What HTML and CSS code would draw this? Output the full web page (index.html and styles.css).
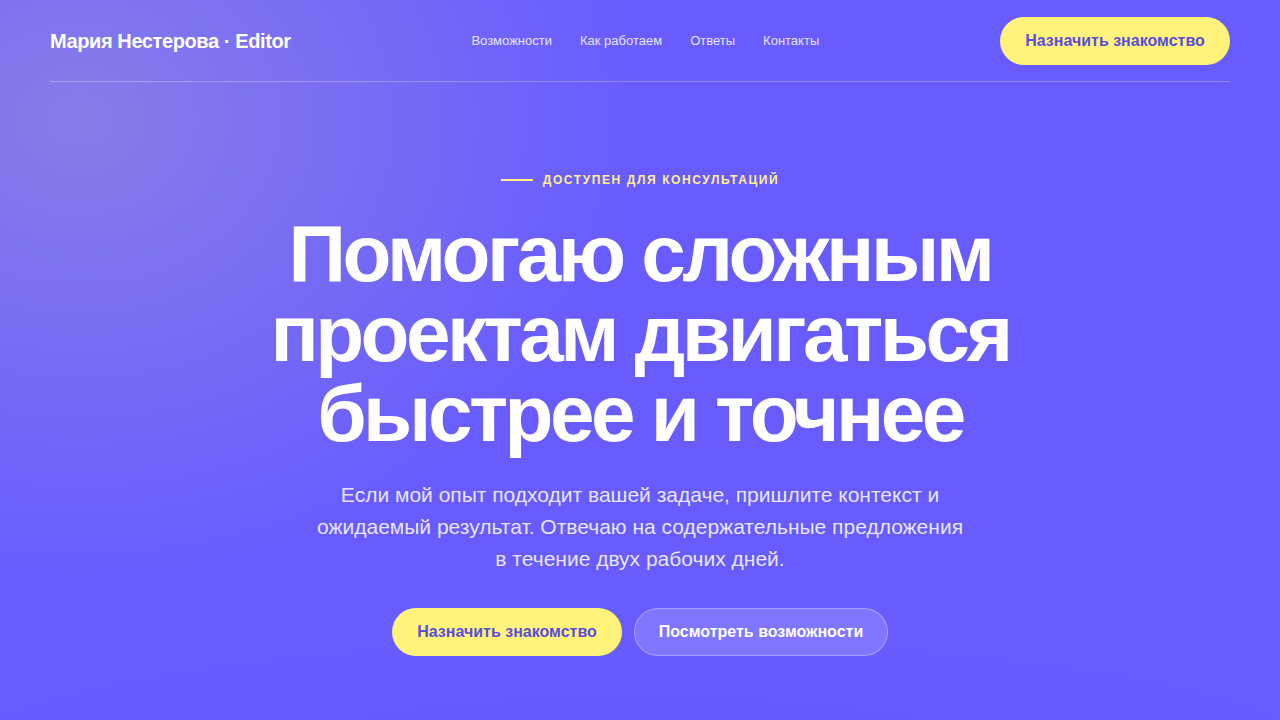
FILE: index.html
```html
<!DOCTYPE html>
<html lang="ru">
<head>
<meta charset="utf-8">
<title>Мария Нестерова · Editor</title>
<link rel="stylesheet" href="styles.css">
</head>
<body>
<div class="page">
  <header class="header">
    <div class="logo">Мария Нестерова · Editor</div>
    <nav class="nav">
      <a href="#">Возможности</a>
      <a href="#">Как работаем</a>
      <a href="#">Ответы</a>
      <a href="#">Контакты</a>
    </nav>
    <a class="btn btn-primary" href="#">Назначить знакомство</a>
  </header>
  <main class="hero">
    <div class="eyebrow"><span class="eyebrow-line"></span>Доступен для консультаций</div>
    <h1 class="title">Помогаю сложным проектам двигаться быстрее и точнее</h1>
    <p class="lead">Если мой опыт подходит вашей задаче, пришлите контекст и ожидаемый результат. Отвечаю на содержательные предложения в течение двух рабочих дней.</p>
    <div class="actions">
      <a class="btn btn-primary" href="#">Назначить знакомство</a>
      <a class="btn btn-ghost" href="#">Посмотреть возможности</a>
    </div>
  </main>
</div>
</body>
</html>
```
FILE: styles.css
```css
* { box-sizing: border-box; }
html, body { margin: 0; padding: 0; }
body {
  font-family: "Liberation Sans", Arial, sans-serif;
  color: #fff;
  min-height: 720px;
  background-color: #685cff;
  background-image:
    radial-gradient(ellipse 560px 460px at 80px 120px, rgba(148, 138, 222, 0.7), rgba(148, 138, 222, 0) 100%),
    radial-gradient(ellipse 700px 120px at 640px 760px, rgba(90, 80, 240, 0.35), rgba(90, 80, 240, 0) 100%);
  overflow: hidden;
}
.page { width: 1180px; margin: 0 auto; height: 720px; }
.header {
  display: flex;
  align-items: center;
  justify-content: space-between;
  padding: 17px 0 16px;
  border-bottom: 1px solid rgba(255, 255, 255, 0.28);
}
.logo { font-size: 20px; font-weight: 700; letter-spacing: -0.4px; white-space: nowrap; }
.nav { display: flex; gap: 28px; margin-top: -2px; }
.nav a { color: rgba(255, 255, 255, 0.86); text-decoration: none; font-size: 13px; }
.btn {
  display: inline-flex;
  align-items: center;
  justify-content: center;
  height: 48px;
  border-radius: 24px;
  font-size: 16px;
  font-weight: 700;
  text-decoration: none;
  white-space: nowrap;
}
.btn-primary { width: 230px; background: #fff37c; color: #5a4fd6; }
.btn-ghost {
  width: 254px;
  background: rgba(255, 255, 255, 0.16);
  border: 1px solid rgba(255, 255, 255, 0.32);
  color: #fff;
}
.hero { display: flex; flex-direction: column; align-items: center; padding-top: 90px; text-align: center; }
.eyebrow {
  display: flex;
  align-items: center;
  gap: 10px;
  font-size: 12px;
  line-height: 16px;
  font-weight: 700;
  letter-spacing: 1.6px;
  text-transform: uppercase;
  color: #fff08c;
}
.eyebrow-line { width: 32px; height: 2px; background: #fff08c; }
.title {
  margin: 26px 0 0;
  width: 760px;
  font-size: 80px;
  line-height: 80px;
  font-weight: 700;
  letter-spacing: -3.5px;
}
.lead {
  margin: 25px 0 0;
  width: 652px;
  font-size: 21px;
  line-height: 32px;
  color: rgba(255, 255, 255, 0.87);
}
.actions { display: flex; gap: 12px; margin-top: 33px; }
```
